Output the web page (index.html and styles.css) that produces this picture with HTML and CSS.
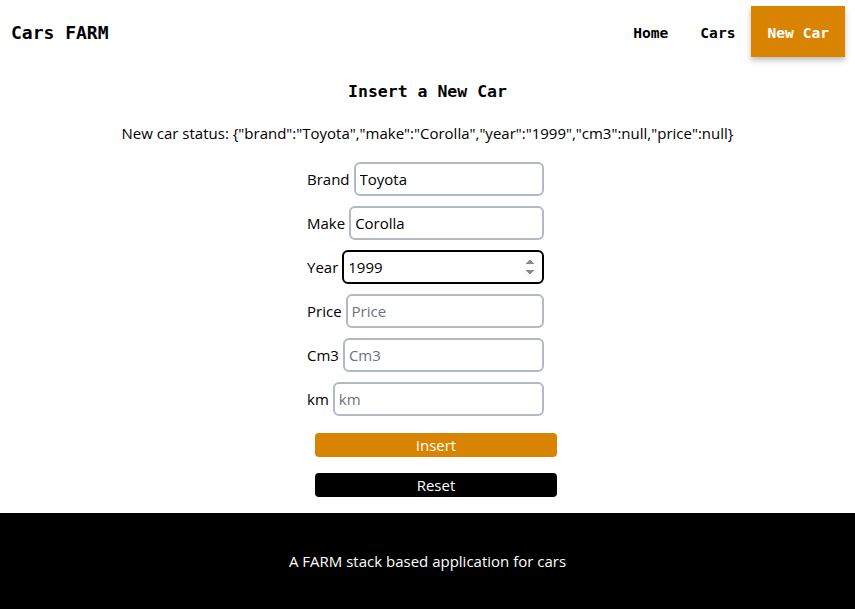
FILE: index.html
```html
<!DOCTYPE html>
<html lang="en">
<head>
<meta charset="utf-8">
<title>Cars FARM</title>
<link rel="stylesheet" href="styles.css">
</head>
<body>
<div class="page">
  <header class="topbar">
    <div class="brand">Cars FARM</div>
    <nav class="nav">
      <a class="nav-link" href="#">Home</a>
      <a class="nav-link" href="#">Cars</a>
      <a class="nav-link nav-active" href="#">New Car</a>
    </nav>
  </header>
  <main class="main">
    <h1 class="title">Insert a New Car</h1>
    <p class="status">New car status: {"brand":"Toyota","make":"Corolla","year":"1999","cm3":null,"price":null}</p>
    <form class="form">
      <div class="fields">
        <label class="row"><span class="label">Brand</span><input class="field" type="text" placeholder="Brand" value="Toyota"></label>
        <label class="row"><span class="label">Make</span><input class="field" type="text" placeholder="Make" value="Corolla"></label>
        <label class="row"><span class="label">Year</span><input class="field field-focus" type="number" placeholder="Year" value="1999" autofocus></label>
        <label class="row"><span class="label">Price</span><input class="field" type="number" placeholder="Price"></label>
        <label class="row"><span class="label">Cm3</span><input class="field" type="number" placeholder="Cm3"></label>
        <label class="row"><span class="label">km</span><input class="field" type="number" placeholder="km"></label>
      </div>
      <div class="actions">
        <button type="button" class="btn btn-insert">Insert</button>
        <button type="button" class="btn btn-reset">Reset</button>
      </div>
    </form>
  </main>
  <footer class="footer">A FARM stack based application for cars</footer>
</div>
</body>
</html>
```

FILE: styles.css
```css
html, body {
  margin: 0;
  padding: 0;
  background: #fff;
}
body {
  font-family: "Open Sans", "Noto Sans", sans-serif;
  font-size: 15px;
  color: #000;
}
.page {
  display: flex;
  flex-direction: column;
  min-height: 609px;
}
.topbar {
  display: flex;
  align-items: center;
  justify-content: space-between;
  height: 63px;
  padding: 0 10px 0 11px;
  box-sizing: border-box;
}
.brand {
  font-family: "DejaVu Sans Mono", "Liberation Mono", monospace;
  font-weight: bold;
  font-size: 18px;
  padding-top: 2px;
}
.nav {
  display: flex;
  align-items: center;
}
.nav-link {
  font-family: "DejaVu Sans Mono", "Liberation Mono", monospace;
  font-weight: bold;
  font-size: 14.6px;
  color: #000;
  text-decoration: none;
  padding: 1px 16px 0;
  height: 50px;
  line-height: 51px;
}
.nav-active {
  background: #d98400;
  color: #fff;
  box-shadow: 0 4px 6px rgba(0,0,0,0.18), 0 2px 4px rgba(0,0,0,0.1);
}
.main {
  flex: 1;
  display: flex;
  flex-direction: column;
  align-items: center;
  padding-top: 17px;
}
.title {
  font-family: "DejaVu Sans Mono", "Liberation Mono", monospace;
  font-weight: bold;
  font-size: 16.5px;
  line-height: 24px;
  margin: 0;
}
.status {
  margin: 17px 0 0;
  line-height: 24px;
}
.form {
  display: flex;
  flex-direction: column;
  align-items: center;
  margin-top: 17px;
}
.fields {
  display: flex;
  flex-direction: column;
  gap: 10px;
  width: 237px;
  margin-left: -4px;
}
.row {
  display: flex;
  align-items: center;
  gap: 4px;
}
.label {
  white-space: nowrap;
}
.field {
  flex: 1;
  min-width: 0;
  height: 34px;
  box-sizing: border-box;
  border: 2px solid #b3b8c4;
  border-radius: 6px;
  padding: 0 4px;
  font-family: inherit;
  font-size: 15px;
  color: #000;
  background: #fff;
  outline: none;
}
.field::placeholder {
  color: #6b7280;
}
.field-focus {
  border-color: #000;
}
.field[type=number]::-webkit-inner-spin-button {
  opacity: 0;
}
.field-focus[type=number]::-webkit-inner-spin-button {
  opacity: 1;
}
.actions {
  display: flex;
  flex-direction: column;
  gap: 16px;
  margin-top: 17px;
  margin-left: 17px;
}
.btn {
  width: 242px;
  height: 24px;
  border: none;
  border-radius: 4px;
  color: #fff;
  font-family: inherit;
  font-size: 15px;
  line-height: 24px;
  padding: 0;
}
.btn-insert {
  background: #d98400;
}
.btn-reset {
  background: #000;
}
.footer {
  margin-top: 16px;
  height: 96px;
  background: #000;
  color: #fff;
  display: flex;
  align-items: center;
  justify-content: center;
}
```
